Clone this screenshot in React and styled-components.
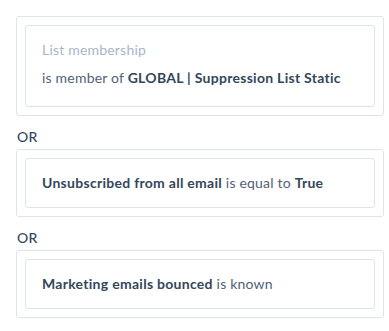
import React from "react";
import styled, { createGlobalStyle } from "styled-components";

const Global = createGlobalStyle`
  html, body { margin: 0; padding: 0; background: #ffffff; }
  body { font-family: "Lato", "Open Sans", sans-serif; -webkit-font-smoothing: antialiased; }
`;

const Page = styled.div`
  padding: 16px 0 0 16px;
  width: 368px;
`;

const Group = styled.div`
  border: 1px solid #dfe3eb;
  border-radius: 3px;
  padding: 8px;
  background: #fff;
`;

const Card = styled.div`
  border: 1px solid #dfe3eb;
  border-radius: 3px;
  padding: 16px;
  background: #fff;
`;

const Label = styled.div`
  font-size: 14px;
  line-height: 16px;
  color: #a9b6c9;
  letter-spacing: 0.2px;
`;

const Line = styled.div`
  font-size: 14px;
  line-height: ${(p) => (p.$spaced ? "24px" : "16px")};
  margin-top: ${(p) => (p.$spaced ? "8px" : "0")};
  color: #506179;
  letter-spacing: 0.2px;
  white-space: nowrap;
`;

const Strong = styled.span`
  font-weight: 700;
  letter-spacing: 0.28px;
  color: #33475b;
`;

const Or = styled.div`
  height: 33px;
  box-sizing: border-box;
  padding-top: 11px;
  font-size: 14px;
  line-height: 20px;
  color: #33475b;
  font-weight: 500;
  padding-left: 1px;
  letter-spacing: 0.3px;
`;

export default function App() {
  return (
    <>
      <Global />
      <Page>
        <Group>
          <Card>
            <Label>List membership</Label>
            <Line $spaced>
              is member of <Strong>GLOBAL | Suppression List Static</Strong>
            </Line>
          </Card>
        </Group>
        <Or>OR</Or>
        <Group>
          <Card>
            <Line>
              <Strong>Unsubscribed from all email</Strong> is equal to <Strong>True</Strong>
            </Line>
          </Card>
        </Group>
        <Or>OR</Or>
        <Group>
          <Card>
            <Line>
              <Strong>Marketing emails bounced</Strong> is known
            </Line>
          </Card>
        </Group>
      </Page>
    </>
  );
}
